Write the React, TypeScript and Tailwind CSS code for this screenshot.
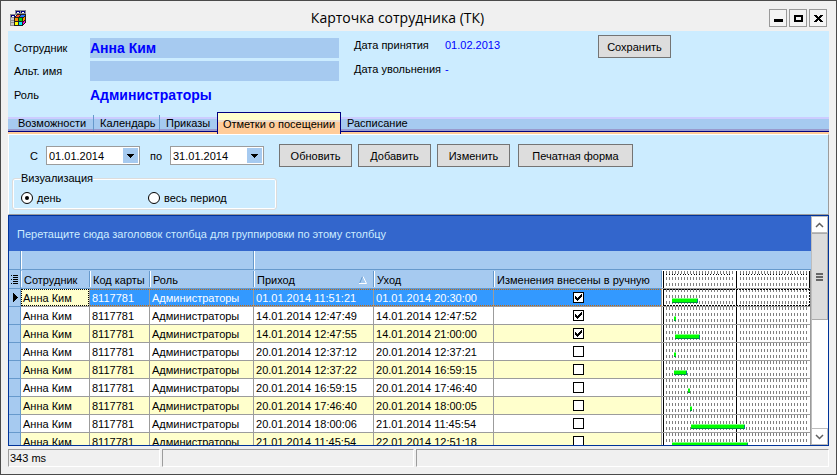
import React, { useState } from "react";
import clsx from "clsx";

type Visit = {
  from: string;
  to: string;
  manual: boolean;
  start: number;
  length: number;
};

const visits: Visit[] = [
  { from: "01.01.2014 11:51:21", to: "01.01.2014 20:30:00", manual: true, start: 10, length: 26 },
  { from: "14.01.2014 12:47:49", to: "14.01.2014 12:47:52", manual: true, start: 12, length: 2 },
  { from: "14.01.2014 12:47:55", to: "14.01.2014 21:00:00", manual: true, start: 13, length: 25 },
  { from: "20.01.2014 12:37:12", to: "20.01.2014 12:37:21", manual: false, start: 12, length: 2 },
  { from: "20.01.2014 12:37:22", to: "20.01.2014 16:59:15", manual: false, start: 12, length: 13 },
  { from: "20.01.2014 16:59:15", to: "20.01.2014 17:46:40", manual: false, start: 26, length: 2 },
  { from: "20.01.2014 17:46:40", to: "20.01.2014 18:00:05", manual: false, start: 28, length: 2 },
  { from: "20.01.2014 18:00:06", to: "21.01.2014 11:45:54", manual: false, start: 29, length: 54 },
  { from: "21.01.2014 11:45:54", to: "22.01.2014 12:51:18", manual: false, start: 10, length: 76 },
];

const tabs = [
  { title: "Возможности", width: "min-w-[82px]" },
  { title: "Календарь", width: "min-w-[66px]" },
  { title: "Приказы", width: "min-w-[57px]" },
  { title: "Отметки о посещении", width: "min-w-[124px]" },
  { title: "Расписание", width: "min-w-[66px]" },
];

const hours = Array.from({ length: 23 }, (_, i) => i);

function AppIcon() {
  return (
    <svg width="16" height="16" viewBox="0 0 16 16" shapeRendering="crispEdges" aria-hidden="true">
      <path fill="#8c8c8c" d="M5 0h11v5H5zM0 4h5v12H0z" />
      <path fill="#c8c8c8" d="M1 8h3v2H1zM1 11h3v1H1zM1 13h3v2H1z" />
      <path fill="#000080" d="M6 1h4v2H6zM11 1h4v2h-4zM1 5h4v2H1z" />
      <path fill="#ffffff" d="M7 2h2v1H7zM12 2h2v1h-2zM2 6h2v1H2z" />
      <path fill="#202020" d="M4 7h1V6h1V5h1V4h9v9h-1v1h-1v1h-1v1H4z" />
      <path fill="#ff5030" d="M7 5h3v1H9v1H6V6h1z" />
      <path fill="#2070ff" d="M11 5h4v1h-1v1h-4V6h1z" />
      <path fill="#ff9000" d="M5 8h3v3H5zM13 8h1V7h1v3h-1v1h-1z" />
      <path fill="#00e000" d="M9 8h3v3H9z" />
      <path fill="#ffff00" d="M5 12h3v3H5z" />
      <path fill="#00e8ff" d="M9 12h3v3H9z" />
      <path fill="#f000d0" d="M13 12h1v-1h1v2h-1v1h-1z" />
    </svg>
  );
}

function WindowButton({ label, children }: { label: string; children: React.ReactNode }) {
  return (
    <button
      type="button"
      aria-label={label}
      className="flex size-[18px] items-center justify-center border border-[#999999] bg-[#f4f4f4]"
    >
      <svg width="12" height="10" viewBox="0 0 12 10" shapeRendering="crispEdges">
        {children}
      </svg>
    </button>
  );
}

function PushButton({ wide, children }: { wide?: boolean; children: React.ReactNode }) {
  return (
    <button
      type="button"
      className={clsx(
        "h-[23px] shrink-0 border border-[#747474] bg-[#dddddd] whitespace-nowrap",
        wide ? "w-[115px]" : "w-[73px]",
      )}
    >
      {children}
    </button>
  );
}

function DateBox({ label, value }: { label: string; value: string }) {
  return (
    <div className="flex h-[19px] w-[94px] shrink-0 border border-[#9c9c9c] bg-white p-px">
      <input aria-label={label} defaultValue={value} className="min-w-0 flex-1 bg-white pl-px text-black outline-none" />
      <button type="button" aria-label={`${label}: календарь`} className="flex w-[15px] items-center justify-center bg-[#a6caf0]">
        <svg width="7" height="4" viewBox="0 0 7 4" shapeRendering="crispEdges">
          <path d="M0 0h7v1H6v1H5v1H4v1H3V3H2V2H1V1H0z" />
        </svg>
      </button>
    </div>
  );
}

function Radio({ label, checked, onSelect }: { label: string; checked: boolean; onSelect: () => void }) {
  return (
    <label className="flex items-center gap-1">
      <span className="grid place-items-center">
        <input
          type="radio"
          name="view"
          checked={checked}
          onChange={onSelect}
          className="col-start-1 row-start-1 size-3 appearance-none rounded-full border border-black bg-white"
        />
        {checked && <span className="pointer-events-none col-start-1 row-start-1 size-1 rounded-full bg-black" />}
      </span>
      {label}
    </label>
  );
}

function Tick({ label, initial }: { label: string; initial: boolean }) {
  const [on, setOn] = useState(initial);
  return (
    <span className="grid place-items-center">
      <input
        type="checkbox"
        aria-label={label}
        checked={on}
        onChange={() => setOn(!on)}
        className="col-start-1 row-start-1 size-[11px] appearance-none border border-black bg-white"
      />
      {on && (
        <svg width="7" height="7" viewBox="0 0 7 7" shapeRendering="crispEdges" className="pointer-events-none col-start-1 row-start-1">
          <path d="M0 2h1v1h1v1h1V3h1V2h1V1h1V0h1v3H6v1H5v1H4v1H3v1H2V6H1V5H0z" />
        </svg>
      )}
    </span>
  );
}

function DayGrid({ start, length, focused, header }: { start?: number; length?: number; focused?: boolean; header?: boolean }) {
  return (
    <svg width="100%" height="17" className="block bg-white" shapeRendering="crispEdges" aria-hidden="true">
      {[4, 78].map((offset) =>
        hours.map((h) => (
          <line
            key={offset + h}
            x1={offset + h * 3 + 0.5}
            x2={offset + h * 3 + 0.5}
            y1="0"
            y2="17"
            stroke="#808080"
            strokeDasharray="3 3"
          />
        )),
      )}
      <path d="M1 0h1v17H1zM74 0h1v17h-1z" />
      {header && <path d="M147 0h1v17h-1z" />}
      {header && (
        <path d="M4 3.5H70M78 3.5H146" stroke="#000" strokeDasharray="1 2 1 2 1 1 1 2" fill="none" />
      )}
      {focused && <path d="M2 .5H148M2 16.5H148M147.500 0V17" stroke="#000" strokeDasharray="2 1" fill="none" />}
      {start !== undefined && length !== undefined && (
        <g>
          <rect x={start} y="9" width={length} height="5" fill="#00ff00" />
          <rect x={start} y="9" width={length} height="1" fill="#80ff80" />
          <rect x={start} y="13" width={length} height="1" fill="#009040" />
          {length > 2 && <rect x={start + length - 1} y="10" width="1" height="4" fill="#008080" />}
        </g>
      )}
    </svg>
  );
}

function HeadCell({ children, sorted }: { children: React.ReactNode; sorted?: boolean }) {
  return (
    <th scope="col" className="border-b border-[#6699cc] p-0 py-px text-left font-normal">
      <div className="flex h-4 items-center justify-between border-r border-l border-r-[#6699cc] border-l-white pt-0.5 pr-1.5 pl-0.5 whitespace-nowrap">
        {children}
        {sorted && (
          <svg width="8" height="8" viewBox="0 0 8 8" aria-hidden="true">
            <path d="M3.500 .5L.5 7.500" stroke="#6699cc" fill="none" />
            <path d="M4 .5L7.500 7.500H0" stroke="#fff" fill="none" />
          </svg>
        )}
      </div>
    </th>
  );
}

const cell = "overflow-hidden border-r border-b border-[#9c9c9c] p-0 whitespace-nowrap";

function VisitRow({ visit, index }: { visit: Visit; index: number }) {
  const current = index === 0;
  const inner = clsx(
    "flex h-[17px] items-center pl-0.5",
    current && "border-y border-dotted border-[#cc6600]",
  );
  return (
    <tr className={clsx(current ? "bg-[#3399ff] text-white" : index % 2 ? "bg-white" : "bg-[#ffffcc]")}>
      <td className="border-r border-b border-[#6699cc] bg-[#a6caf0] p-0">
        {current && (
          <svg width="11" height="9" viewBox="0 0 11 9" shapeRendering="crispEdges" className="block">
            <path d="M4 0h1v1h1v1h1v1h1v1h1v1H8v1H7v1H6v1H5v1H4z" />
          </svg>
        )}
      </td>
      <td className={cell}>
        <div
          className={clsx(
            "flex h-[17px] items-center",
            current ? "border border-dotted border-black bg-[#ffffcc] pl-px text-black" : "pl-0.5",
          )}
        >
          Анна Ким
        </div>
      </td>
      <td className={cell}><div className={inner}>8117781</div></td>
      <td className={cell}><div className={inner}>Администраторы</div></td>
      <td className={cell}><div className={inner}>{visit.from}</div></td>
      <td className={cell}><div className={inner}>{visit.to}</div></td>
      <td className={cell}>
        <div className={clsx(inner, "justify-center")}>
          <Tick label={`Изменения внесены в ручную, ${visit.from}`} initial={visit.manual} />
        </div>
      </td>
      <td className={cell}>
        <DayGrid start={visit.start} length={visit.length} focused={current} />
      </td>
    </tr>
  );
}

function VisitTable() {
  return (
    <table className="w-full table-fixed border-separate border-spacing-0">
      <colgroup>
        <col className="w-3" />
        <col className="w-[69px]" />
        <col className="w-[60px]" />
        <col className="w-[104px]" />
        <col className="w-[120px]" />
        <col className="w-[120px]" />
        <col className="w-[168px]" />
        <col />
      </colgroup>
      <thead className="bg-[#a6caf0]">
        <tr>
          <td className="h-[19px] border-r border-b border-[#6699cc] p-0" />
          <td colSpan={3} className="border-r border-b border-l border-[#6699cc] border-l-white p-0" />
          <td colSpan={4} className="border-b border-l border-[#6699cc] border-l-white p-0" />
        </tr>
        <tr>
          <td className="border-r border-b border-[#6699cc] p-0">
            <svg width="11" height="9" viewBox="0 0 11 9" shapeRendering="crispEdges" className="block">
              <path d="M2 0h1v1H2zM2 4h1v1H2zM2 8h1v1H2zM4 0h5v1H4zM4 2h5v1H4zM4 4h5v1H4zM4 6h5v1H4zM4 8h5v1H4z" />
            </svg>
          </td>
          <HeadCell>Сотрудник</HeadCell>
          <HeadCell>Код карты</HeadCell>
          <HeadCell>Роль</HeadCell>
          <HeadCell sorted>Приход</HeadCell>
          <HeadCell>Уход</HeadCell>
          <HeadCell>Изменения внесены в ручную</HeadCell>
          <td className="border-r border-b border-[#9c9c9c] bg-white p-0 align-bottom">
            <DayGrid header />
          </td>
        </tr>
      </thead>
      <tbody>
        {visits.map((visit, index) => (
          <VisitRow key={visit.from} visit={visit} index={index} />
        ))}
      </tbody>
    </table>
  );
}

function ScrollBar() {
  return (
    <div className="flex w-[17px] shrink-0 flex-col bg-white">
      <button type="button" aria-label="Вверх" className="flex h-[17px] items-center justify-center border border-[#bdbdbd] bg-white">
        <svg width="9" height="6" viewBox="0 0 9 6"><path d="M1 5l3.500-3.500L8 5" stroke="#606060" strokeWidth="1.500" fill="none" /></svg>
      </button>
      <div className="flex-1 border-l border-[#bdbdbd]">
        <div className="flex h-[87px] flex-col items-center justify-center gap-px border border-l-0 border-[#ababab] bg-[#dcdcdc]">
          <span className="h-0.5 w-[7px] bg-[#666666]" />
          <span className="h-0.5 w-[7px] bg-[#666666]" />
          <span className="h-0.5 w-[7px] bg-[#666666]" />
        </div>
      </div>
      <button type="button" aria-label="Вниз" className="flex h-[17px] items-center justify-center border border-[#bdbdbd] bg-white">
        <svg width="9" height="6" viewBox="0 0 9 6"><path d="M1 1l3.500 3.500L8 1" stroke="#606060" strokeWidth="1.500" fill="none" /></svg>
      </button>
    </div>
  );
}

export default function App() {
  const [active, setActive] = useState(3);
  const [wholePeriod, setWholePeriod] = useState(false);

  return (
    <div className="flex h-screen flex-col overflow-hidden border border-[#4a4a4a] bg-[#f0f0f0] px-[7px] pb-[7px] font-['Liberation_Sans',Arial,sans-serif] text-[11px] leading-[14px] text-black">
      <header className="flex h-[30px] shrink-0 items-center pt-1 pr-0.5 pl-0.5">
        <AppIcon />
        <h1 className="flex-1 text-center font-['Open_Sans','Noto_Sans',sans-serif] text-sm leading-5">Карточка сотрудника (ТК)</h1>
        <div className="flex gap-0.5">
          <WindowButton label="Свернуть"><path d="M2 6h9v3H2z" /></WindowButton>
          <WindowButton label="Развернуть"><path fillRule="evenodd" d="M2 2h9v7H2zM4 4v3h5V4z" /></WindowButton>
          <WindowButton label="Закрыть"><path d="M2 2h3v1h1v1h1V3h1V2h3v1h-1v1H9v1H8v1h1v1h1v1h1v1H8V8H7V7H6v1H5v1H2V8h1V7h1V6h1V5H4V4H3V3H2z" /></WindowButton>
        </div>
      </header>

      <section className="flex shrink-0 items-start bg-[#ccecff] pb-1.5">
        <div className="grid grid-cols-[76px_249px] items-center gap-y-[3px] pt-[7px] pl-1.5">
          <label htmlFor="employee">Сотрудник</label>
          <input id="employee" defaultValue="Анна Ким" className="h-5 bg-[#a6caf0] text-sm font-bold text-[#0000ff] outline-none" />
          <label htmlFor="alias">Альт. имя</label>
          <input id="alias" className="h-5 bg-[#a6caf0] text-sm font-bold text-[#0000ff] outline-none" />
          <span>Роль</span>
          <output className="h-[22px] text-sm leading-[22px] font-bold text-[#0000ff]">Администраторы</output>
        </div>
        <dl className="grid grid-cols-[91px_153px] pt-0.5 pl-[15px] leading-6">
          <dt>Дата принятия</dt>
          <dd className="text-[#0000ff]">01.02.2013</dd>
          <dt className="whitespace-nowrap">Дата увольнения</dt>
          <dd className="text-[#0000ff]">-</dd>
        </dl>
        <div className="pt-1">
          <PushButton>Сохранить</PushButton>
        </div>
      </section>

      <div className="shrink-0 bg-[#ccecff]">
        <div
          role="tablist"
          className="flex h-[22px] bg-[linear-gradient(to_bottom,transparent_5px,#ccccff_5px,#ccccff_7px,#a6caf0_7px,#a6caf0_17px,#9999cc_17px,#9999cc_19px,#000080_19px,#000080_20px,#ffcc99_20px)] pl-1"
        >
          {tabs.map((tab, index) => (
            <button
              key={tab.title}
              type="button"
              role="tab"
              aria-selected={index === active}
              onClick={() => setActive(index)}
              className={clsx(
                "flex items-center whitespace-nowrap",
                tab.width,
                index === active &&
                  "justify-center border border-b-0 border-[#000080] bg-[linear-gradient(to_bottom,#ffffcc_7px,#eeddcc_7px,#eeddcc_9px,#ffcc99_9px)]",
              )}
            >
              <span
                className={clsx(
                  "flex h-4 items-center",
                  index !== active && "flex-1 pl-1.5",
                  index + 1 < active && "border-r border-[#6699cc]",
                )}
              >
                {tab.title}
              </span>
            </button>
          ))}
        </div>
      </div>

      <section className="shrink-0 border border-t-white border-r-[#9c9c9c] border-b-[#9c9c9c] border-l-white bg-[#ccecff] pt-[9px] pb-1">
        <div className="flex items-center pl-[21px]">
          <span className="w-4">С</span>
          <DateBox label="Начало периода" value="01.01.2014" />
          <span className="w-[30px] pl-2.5">по</span>
          <DateBox label="Конец периода" value="31.01.2014" />
          <div className="flex gap-1.5 pr-2 pl-[15px]">
            <PushButton>Обновить</PushButton>
            <PushButton>Добавить</PushButton>
            <PushButton>Изменить</PushButton>
          </div>
          <PushButton wide>Печатная форма</PushButton>
        </div>
        <fieldset className="mt-1 ml-[3px] grid w-[265px] grid-cols-[127px_auto] rounded-[3px] border border-[#dcdcdc] px-2 pt-1.5 pb-1 shadow-[inset_0_0_0_1px_white]">
          <legend className="bg-[#ccecff]">Визуализация</legend>
          <Radio label="день" checked={!wholePeriod} onSelect={() => setWholePeriod(false)} />
          <Radio label="весь период" checked={wholePeriod} onSelect={() => setWholePeriod(true)} />
        </fieldset>
      </section>

      <main className="flex min-h-0 flex-1 overflow-hidden border border-[#003399] bg-white">
        <div className="min-w-0 flex-1 overflow-hidden">
          <p className="bg-[#3366cc] px-2 pt-[11px] pb-2.5 text-[#ccecff]">
            Перетащите сюда заголовок столбца для группировки по этому столбцу
          </p>
          <VisitTable />
        </div>
        <ScrollBar />
      </main>

      <footer className="flex shrink-0 gap-0.5 pt-[3px]">
        <div className="h-[18px] w-[152px] border border-t-[#9c9c9c] border-r-white border-b-white border-l-[#9c9c9c] pl-px leading-4">343 ms</div>
        <div className="h-[18px] w-[252px] border border-t-[#9c9c9c] border-r-white border-b-white border-l-[#9c9c9c]" />
        <div className="h-[18px] flex-1 border border-t-[#9c9c9c] border-r-white border-b-white border-l-[#9c9c9c]" />
      </footer>
    </div>
  );
}
